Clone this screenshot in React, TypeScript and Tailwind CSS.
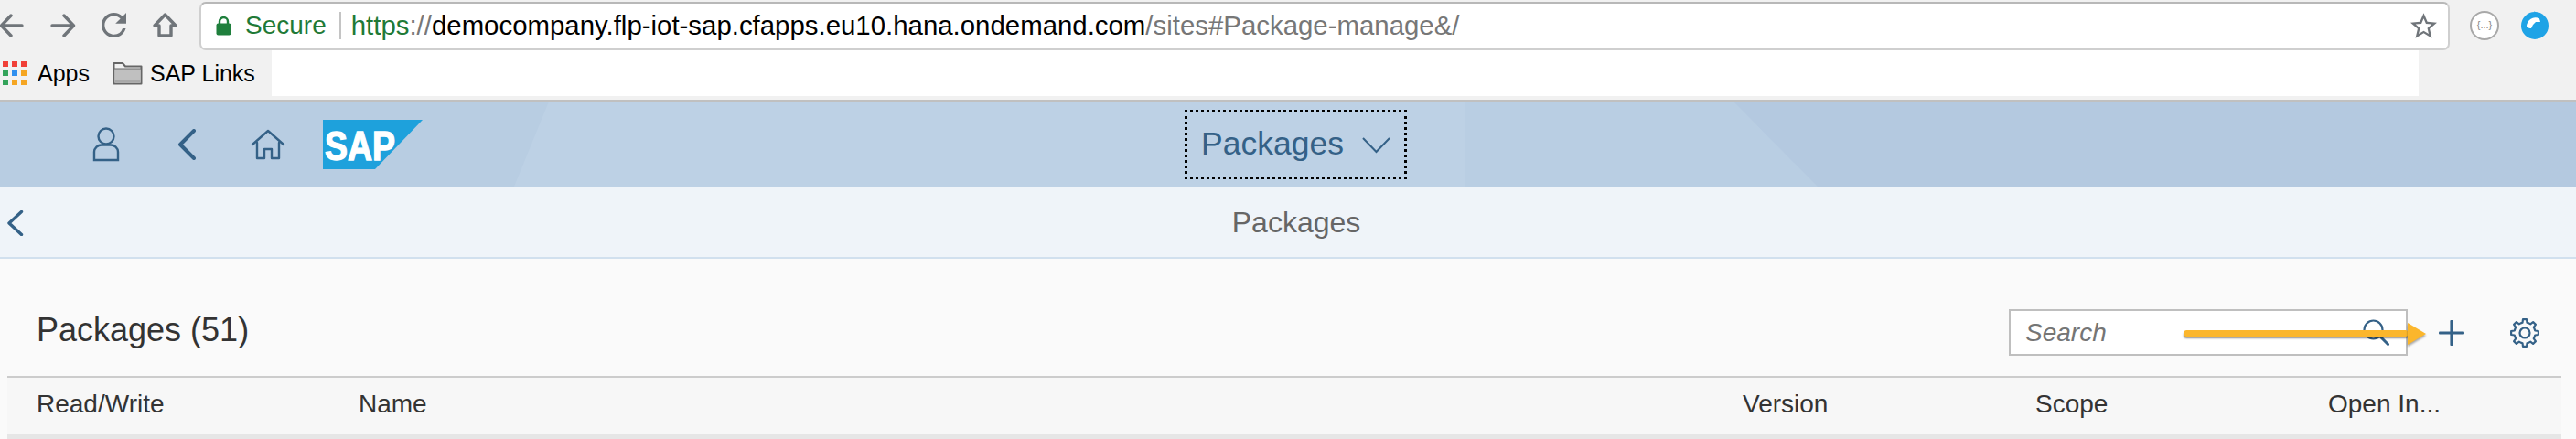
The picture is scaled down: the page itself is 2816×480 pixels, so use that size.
import React from 'react';

const BLUE = '#346187';

const columns = [
  { label: 'Read/Write', width: 'w-[352px]' },
  { label: 'Name', width: 'w-[1513px]' },
  { label: 'Version', width: 'w-[320px]' },
  { label: 'Scope', width: 'w-[320px]' },
  { label: 'Open In...', width: 'flex-1' }
];

const appColors = ['#f04038', '#f04038', '#f04038', '#34a35a', '#2f8fef', '#f5a623', '#34a35a', '#f5a623', '#f5a623'];

/** 齿轮图标的外轮廓 */
const gearPath = () => {
  const points: string[] = [];
  const teeth = 8;
  for (let i = 0; i < teeth; i++) {
    const step = (Math.PI * 2) / teeth;
    const a = i * step - Math.PI / 2;
    const offsets: [number, number][] = [
      [-0.5, 11.5],
      [-0.28, 11.5],
      [-0.17, 15],
      [0.17, 15],
      [0.28, 11.5]
    ];
    offsets.forEach(([o, r]) => {
      const x = 17 + r * Math.cos(a + o * step);
      const y = 17 + r * Math.sin(a + o * step);
      points.push(`${x.toFixed(2)} ${y.toFixed(2)}`);
    });
  }
  return `M${points.join(' L')} Z`;
};

const BrowserNavIcons = () => (
  <div className="w-[218px] flex items-center">
    <svg width="26" height="26" viewBox="0 0 26 26" fill="none" stroke="#70757a" strokeWidth="3.4" strokeLinecap="round" strokeLinejoin="round">
      <path d="M24 13 H2 M12 2 L1.5 13 L12 24" />
    </svg>
    <svg width="28" height="26" viewBox="0 0 28 26" fill="none" stroke="#70757a" strokeWidth="3.4" strokeLinecap="round" strokeLinejoin="round" className="ml-[29px]">
      <path d="M2 13 H25 M15 2 L25.5 13 L15 24" />
    </svg>
    <svg width="27" height="27" viewBox="4 4 16 16" fill="#70757a" className="ml-[28px]">
      <path d="M17.65 6.35A7.958 7.958 0 0 0 12 4c-4.42 0-7.99 3.58-7.99 8s3.57 8 7.99 8c3.73 0 6.84-2.55 7.73-6h-2.08A5.99 5.99 0 0 1 12 18c-3.31 0-6-2.69-6-6s2.69-6 6-6c1.66 0 3.14.69 4.22 1.78L13 11h7V4l-2.35 2.35z" />
    </svg>
    <svg width="27" height="27" viewBox="0 0 27 27" fill="none" stroke="#70757a" strokeWidth="3.4" strokeLinejoin="round" className="ml-[29px]">
      <path d="M13.5 2 L25 14 H20 V25 H7 V14 H2 Z" />
    </svg>
  </div>
);

const BrowserBar = () => (
  <div className="h-[111px] bg-[#f1f1f1] border-b-2 border-[#c0c0c0] flex flex-col shrink-0">
    <div className="h-[55px] flex items-center">
      <BrowserNavIcons />
      <div className="w-[2460px] h-[53px] mt-[1px] bg-white border-2 border-[#cfcfcf] border-t-[#b8b8b8] rounded-[7px] flex items-center pl-[16px] pr-[12px]">
        <svg width="17" height="22" viewBox="0 0 17 22" className="mr-[15px]">
          <path d="M4 10 V6.5 a4.5 4.5 0 0 1 9 0 V10" fill="none" stroke="#1f7f3c" strokeWidth="2.4" />
          <rect x="0.5" y="8.5" width="16" height="13" rx="2" fill="#1f7f3c" />
        </svg>
        <span className="text-[28px] text-[#1f7a37] leading-none">Secure</span>
        <div className="w-[2px] h-[30px] bg-[#c4c4c4] ml-[14px] mr-[11px]" />
        <span className="text-[29.4px] leading-none whitespace-nowrap">
          <span className="text-[#1f7a37]">https</span>
          <span className="text-[#777]">://</span>
          <span className="text-black">democompany.flp-iot-sap.cfapps.eu10.hana.ondemand.com</span>
          <span className="text-[#777]">/sites#Package-manage&amp;/</span>
        </span>
        <svg width="29" height="28" viewBox="2 2 20 19" fill="#70757a" className="ml-auto">
          <path d="M22 9.24l-7.19-.62L12 2 9.19 8.63 2 9.24l5.46 4.73L5.82 21 12 17.27 18.18 21l-1.63-7.03L22 9.24zM12 15.4l-3.76 2.27 1-4.28-3.32-2.88 4.38-.38L12 6.1l1.71 4.04 4.38.38-3.32 2.88 1 4.28L12 15.4z" />
        </svg>
      </div>
      <div className="flex-1 flex items-center">
        <div className="ml-[22px] w-[32px] h-[32px] rounded-full border-2 border-[#a8a8a8] bg-white flex items-center justify-center text-[11px] text-[#888]">{'{...}'}</div>
        <svg width="30" height="31" viewBox="0 0 30 31" className="ml-[24px]">
          <circle cx="15" cy="16" r="15" fill="#1fa3e6" />
          <path d="M0 16 a15 15 0 0 0 30 0 a15 15 0 0 1 -30 0 Z" fill="#45c0f2" />
          <path d="M6 17 a10 10 0 0 1 14 -9 l1 4 l-5 0 l-3 3 l-2 4 a5 5 0 0 1 -5 -2 Z" fill="#ffffff" />
          <path d="M14 0 L23 6 L24 14 L19 7 Z" fill="#1fa3e6" />
        </svg>
      </div>
    </div>
    <div className="h-[50px] flex">
      <div className="w-[297px] flex items-center">
        <div className="ml-[3px] w-[26px] h-[26px] grid grid-cols-3 gap-[4px]">
          {appColors.map((color, i) => (
            <div key={i} style={{ backgroundColor: color }} />
          ))}
        </div>
        <span className="ml-[12px] text-[25px] text-black leading-none">Apps</span>
        <svg width="33" height="26" viewBox="0 0 33 26" className="ml-[25px]">
          <path d="M1.5 24.5 V2 H11 L14 5.5 H31.5 V24.5 Z" fill="#f1f1f1" stroke="#666666" strokeWidth="2" strokeLinejoin="round" />
          <rect x="2.5" y="8" width="28" height="15.5" fill="#c0c0c0" />
          <path d="M2 8 H31" stroke="#666666" strokeWidth="1" />
          <rect x="2.5" y="20" width="28" height="3.5" fill="#a8a8a8" />
        </svg>
        <span className="ml-[8px] text-[25px] text-black leading-none whitespace-nowrap">SAP Links</span>
      </div>
      <div className="w-[2347px] bg-white" />
    </div>
  </div>
);

const ShellIcons = () => (
  <>
    <svg width="30" height="38" viewBox="0 0 30 38" fill="none" stroke={BLUE} strokeWidth="2.4" className="ml-[101px]">
      <circle cx="15" cy="10" r="8.5" />
      <path d="M2 36 V27 a8 8 0 0 1 8 -7.5 H20 a8 8 0 0 1 8 7.5 V36 Z" />
    </svg>
    <svg width="20" height="34" viewBox="0 0 20 34" fill="none" stroke={BLUE} strokeWidth="4" strokeLinecap="round" strokeLinejoin="round" className="ml-[63px]">
      <path d="M18 2 L3 17 L18 32" />
    </svg>
    <svg width="38" height="34" viewBox="0 0 38 34" fill="none" stroke={BLUE} strokeWidth="2.4" strokeLinecap="round" strokeLinejoin="round" className="ml-[60px]">
      <path d="M2 17 L19 2 L36 17" />
      <path d="M7 15 V32 H15 V22 H23 V32 H31 V15" />
    </svg>
  </>
);

const SapLogo = () => (
  <svg width="109" height="54" viewBox="0 0 109 54" className="ml-[41px]">
    <path d="M0 0 H109 L57 54 H0 Z" fill="#1ea1dc" />
    <text x="2" y="44" fontFamily="Liberation Sans, Arial, sans-serif" fontWeight="700" fontSize="45" textLength="77" lengthAdjust="spacingAndGlyphs" fill="#ffffff" stroke="#ffffff" strokeWidth="1.4">SAP</text>
  </svg>
);

const ShellBar = () => (
  <div className="h-[93px] shrink-0 bg-[#b8cde2] flex items-center relative">
    {/* 背景斜面 */}
    <svg width="2816" height="93" viewBox="0 0 2816 93" className="absolute left-0 top-0">
      <polygon points="600,0 1602,0 1602,93 562,93" fill="#bdd1e5" />
      <polygon points="1602,0 1895,0 1987,93 1602,93" fill="#b9cee3" />
      <polygon points="1895,0 2816,0 2816,93 1987,93" fill="#b4c9e0" />
    </svg>
    <div className="relative flex items-center">
      <ShellIcons />
      <SapLogo />
    </div>
    <div className="absolute left-[1295px] top-[9px] w-[243px] h-[76px] border-[3px] border-dotted border-black flex items-center pl-[15px] text-[#346187]">
      <span className="text-[35.5px] leading-none">Packages</span>
      <svg width="31" height="18" viewBox="0 0 31 18" fill="none" stroke={BLUE} strokeWidth="2" className="ml-[20px] mt-[2px]">
        <path d="M1 1 L15.5 16 L30 1" />
      </svg>
    </div>
  </div>
);

const SubHeader = () => (
  <div className="h-[79px] shrink-0 bg-[#eff4f9] border-b-2 border-[#d1e0ee] flex items-center justify-center relative pl-[18px]">
    <svg width="18" height="28" viewBox="0 0 18 28" fill="none" stroke={BLUE} strokeWidth="3.4" strokeLinecap="round" strokeLinejoin="round" className="absolute left-[8px] top-[26px]">
      <path d="M15.5 1.5 L2 14 L15.5 26.5" />
    </svg>
    <span className="text-[32px] text-[#666]">Packages</span>
  </div>
);

const PackagesToolbar = () => (
  <div className="h-[128px] flex items-end pb-[22px] relative">
    <h2 className="pl-[32px] mb-[3px] text-[36px] text-[#333] leading-[51px] font-normal">Packages (51)</h2>
    <div className="ml-auto flex items-center">
      <div className="w-[436px] h-[51px] bg-white border-2 border-[#bfbfbf] flex items-center pl-[16px] pr-[18px]">
        <span className="italic text-[28px] text-[#757575]">Search</span>
        <svg width="29" height="29" viewBox="0 0 29 29" fill="none" stroke={BLUE} strokeWidth="2.2" strokeLinecap="round" className="ml-auto">
          <circle cx="11.5" cy="11.5" r="10" />
          <path d="M18.5 18.5 L27.5 27.5" strokeWidth="3" />
        </svg>
      </div>
      <svg width="28" height="28" viewBox="0 0 28 28" fill={BLUE} className="ml-[34px]">
        <rect x="0" y="12.4" width="28" height="3.2" rx="1" />
        <rect x="12.4" y="0" width="3.2" height="28" rx="1" />
      </svg>
      <svg width="34" height="34" viewBox="0 0 34 34" fill="none" stroke={BLUE} strokeWidth="2.2" strokeLinejoin="round" className="ml-[49px] mr-[23px]">
        <path d={gearPath()} />
        <circle cx="17" cy="17" r="5.5" />
      </svg>
    </div>
    {/* 黄色标注箭头 */}
    <div className="absolute left-[2379px] top-[78px] w-[246px] h-[7px] bg-[#fbb62c] rounded-full shadow-[0_2px_2px_rgba(0,0,0,0.45)]" />
    <div className="absolute left-[2624px] top-[70px] border-y-[12px] border-y-transparent border-l-[20px] border-l-[#fbb62c] drop-shadow-[0_2px_1px_rgba(0,0,0,0.35)]" />
  </div>
);

const PackagesTable = () => (
  <div className="flex-1 bg-[#fafafa] pl-[8px] pr-[16px] flex flex-col">
    <PackagesToolbar />
    <div className="h-[69px] bg-[#f7f7f7] border-t-2 border-[#cccccc] border-b-[6px] border-b-[#e6e6e6] flex items-center pl-[32px]">
      {columns.map(column => (
        <div key={column.label} className={`${column.width} text-[28px] text-[#333] whitespace-nowrap leading-none mb-[3px]`}>
          {column.label}
        </div>
      ))}
    </div>
  </div>
);

export default function App() {
  return (
    <div className="w-[2816px] h-[480px] overflow-hidden flex flex-col font-['Liberation_Sans',Arial,sans-serif]">
      <BrowserBar />
      <ShellBar />
      <SubHeader />
      <PackagesTable />
    </div>
  );
}
